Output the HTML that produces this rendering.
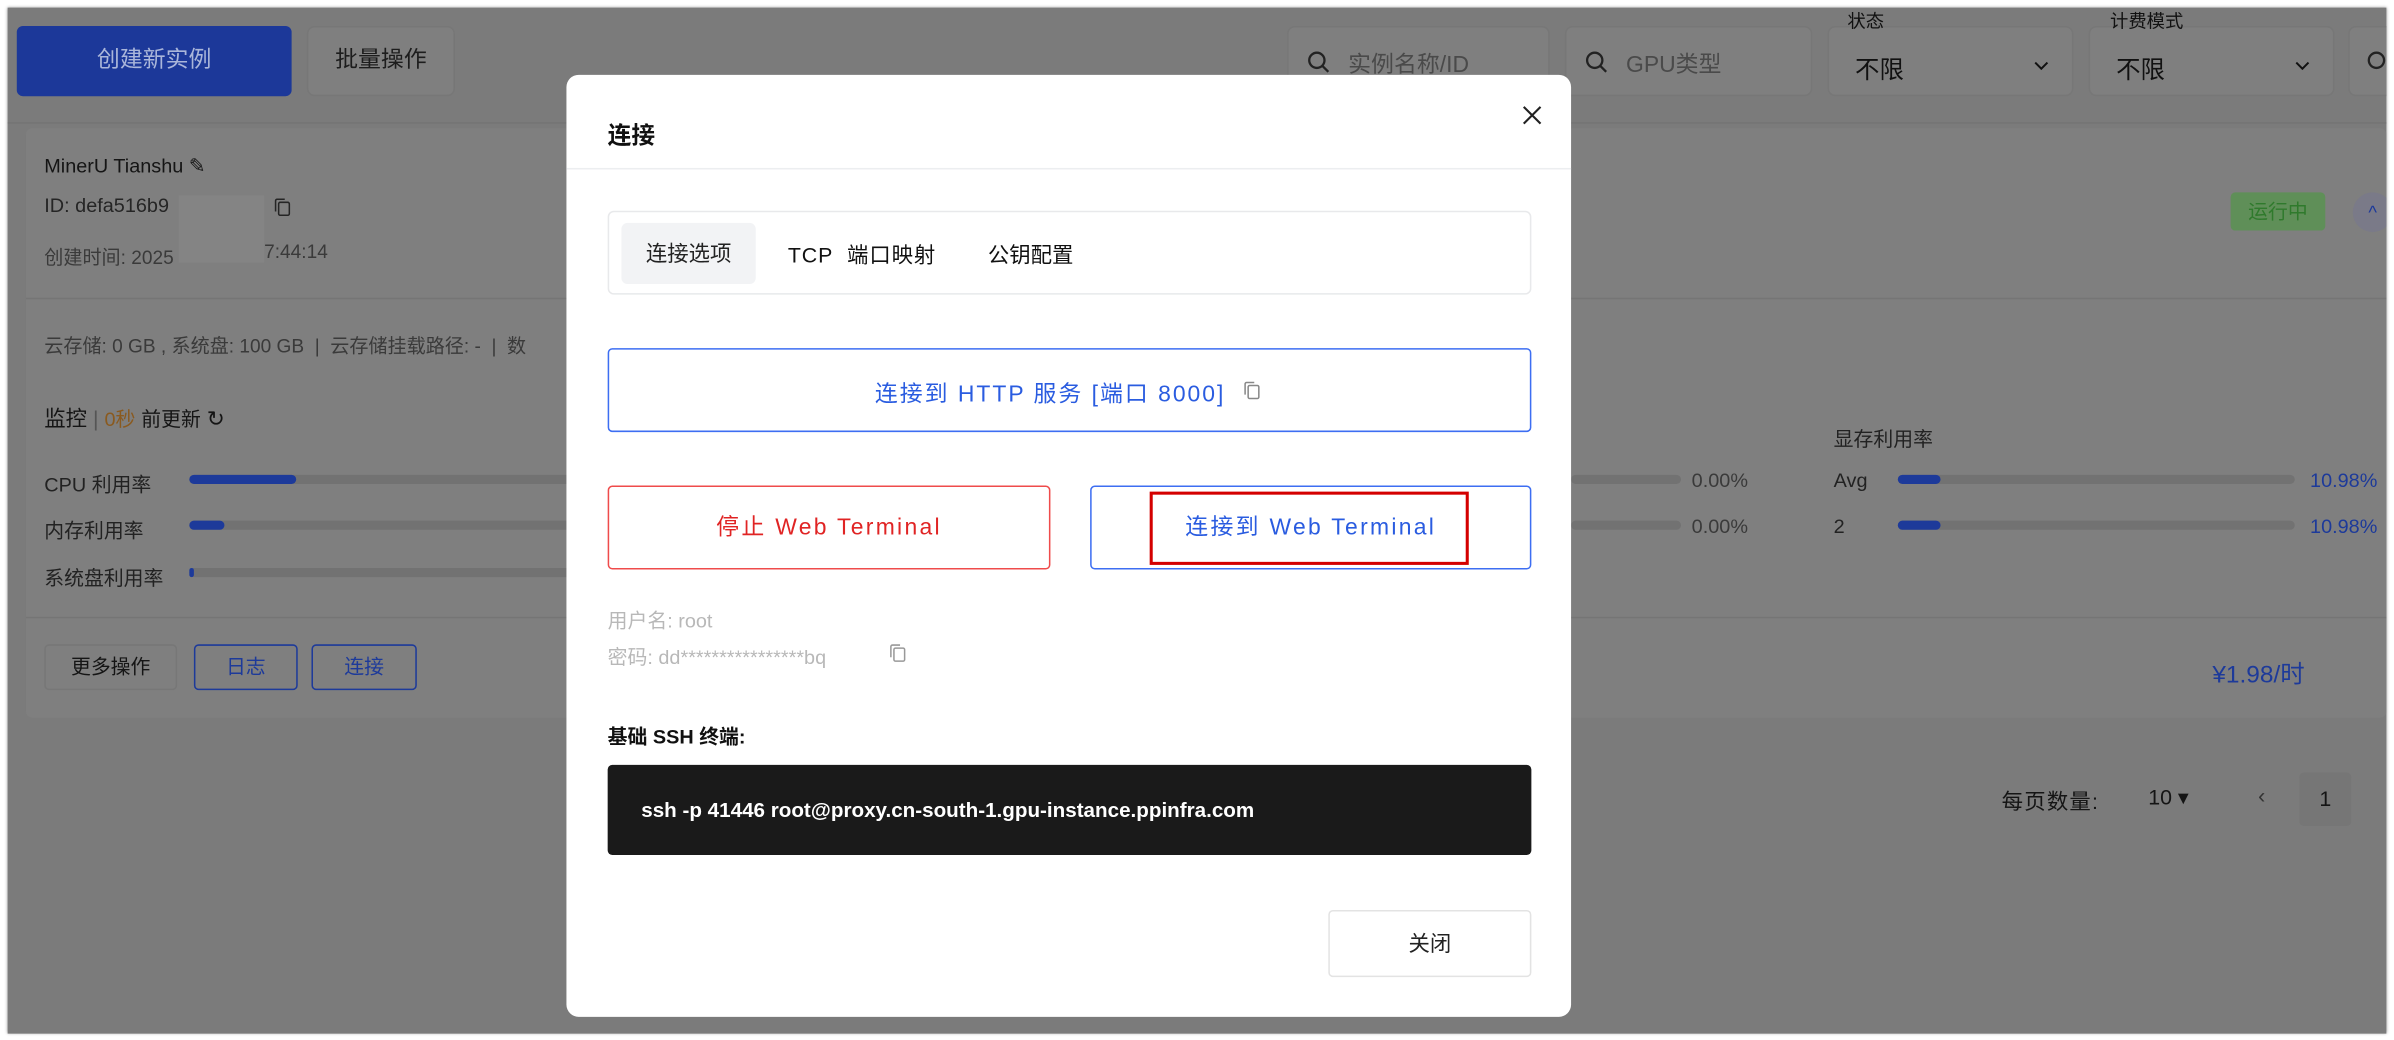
<!DOCTYPE html>
<html><head><meta charset="utf-8"><style>
html,body{margin:0;padding:0;background:#fff;width:2394px;height:1040px;overflow:hidden}
#w{position:absolute;left:0;top:0;width:1568px;height:681px;transform:scale(1.52679);transform-origin:0 0;font-family:"Liberation Sans","Noto Sans CJK SC",sans-serif;font-size:14px}
.a{position:absolute}
#bg{left:5px;top:5px;width:1558px;height:672px;background:#7b7b7b;overflow:hidden;box-shadow:0 0 2px #999}
.t{white-space:nowrap}
.track{position:absolute;height:6px;border-radius:3px;background:#727272}
.fill{position:absolute;left:0;top:0;height:6px;border-radius:3px;background:#1d3a9a}
.inp{position:absolute;top:12px;height:46px;background:#7f7f7f;border:1px solid #777;border-radius:5px;box-sizing:border-box}
svg{position:absolute}
</style></head><body><div id="w">
<div class="a" id="bg">
  <div class="a" style="left:6px;top:12px;width:180px;height:46px;background:#1c3899;border-radius:4px;color:#aab6da;font-size:15px;text-align:center;line-height:46px">创建新实例</div>
  <div class="a" style="left:196px;top:12px;width:97px;height:46px;background:#7f7f7f;border:1px solid #777;box-sizing:border-box;border-radius:5px;color:#1d1d1d;font-size:15px;text-align:center;line-height:44px">批量操作</div>
  <div class="inp" style="left:838px;width:172px"><svg style="left:12px;top:15px" width="15" height="15" viewBox="0 0 15 15"><circle cx="6.5" cy="6.5" r="5" fill="none" stroke="#222" stroke-width="1.5"/><path d="M10 10l4 4" stroke="#222" stroke-width="1.5"/></svg><span class="a t" style="left:39px;top:13px;color:#4a4a4a;font-size:15px">实例名称/ID</span></div>
  <div class="inp" style="left:1020px;width:162px"><svg style="left:12px;top:15px" width="15" height="15" viewBox="0 0 15 15"><circle cx="6.5" cy="6.5" r="5" fill="none" stroke="#222" stroke-width="1.5"/><path d="M10 10l4 4" stroke="#222" stroke-width="1.5"/></svg><span class="a t" style="left:39px;top:13px;color:#4a4a4a;font-size:15px">GPU类型</span></div>
  <div class="inp" style="left:1192px;width:161px"><span class="a t" style="left:17px;top:14px;color:#111;font-size:16px">不限</span><svg style="left:134px;top:22px" width="10" height="6" viewBox="0 0 10 6"><path d="M1 1l4 4 4-4" fill="none" stroke="#111" stroke-width="1.3"/></svg></div>
  <div class="inp" style="left:1363px;width:161px"><span class="a t" style="left:17px;top:14px;color:#111;font-size:16px">不限</span><svg style="left:134px;top:22px" width="10" height="6" viewBox="0 0 10 6"><path d="M1 1l4 4 4-4" fill="none" stroke="#111" stroke-width="1.3"/></svg></div>
  <div class="a t" style="left:1205px;top:2px;font-size:12px;color:#111;line-height:14px">状态</div>
  <div class="a t" style="left:1377px;top:2px;font-size:12px;color:#111;line-height:14px">计费模式</div>
  <div class="inp" style="left:1533px;width:40px"><svg style="left:11px;top:15px" width="15" height="15" viewBox="0 0 15 15"><circle cx="6.5" cy="6.5" r="5" fill="none" stroke="#222" stroke-width="1.5"/></svg></div>
  <div class="a" style="left:0;top:75px;width:1558px;height:1px;background:#747474"></div>
  <div class="a" style="left:12px;top:79px;width:1546px;height:386px;background:#7f7f7f;border-radius:4px"></div>
  <div class="a t" style="left:24px;top:96px;color:#151515;font-size:13px">MinerU Tianshu ✎</div>
  <div class="a t" style="left:24px;top:122px;color:#252525;font-size:13px">ID: defa516b9</div>
  <svg style="left:174px;top:124px" width="12" height="13" viewBox="0 0 12 13"><rect x="3.5" y="3.5" width="7" height="8.5" rx="1" fill="none" stroke="#252525"/><path d="M1.5 9.5V2.5a1 1 0 0 1 1-1h5" fill="none" stroke="#252525"/></svg>
  <div class="a t" style="left:24px;top:153px;color:#3a3a3a;font-size:12.5px">创建时间: 2025</div>
  <div class="a t" style="left:168px;top:153px;color:#3a3a3a;font-size:12.5px">7:44:14</div>
  <div class="a" style="left:112px;top:123px;width:56px;height:44px;background:#848484"></div>
  <div class="a" style="left:1456px;top:121px;width:62px;height:25px;background:#5f8f58;border-radius:3px;color:#2f7a2c;font-size:13px;text-align:center;line-height:25px">运行中</div>
  <div class="a" style="left:1536px;top:121px;width:26px;height:26px;border-radius:13px;background:#7a7a88;color:#1d3a9a;text-align:center;line-height:26px;font-size:12px">^</div>
  <div class="a" style="left:12px;top:190px;width:1546px;height:1px;background:#757575"></div>
  <div class="a t" style="left:24px;top:211px;color:#3a3a3a;font-size:12.5px">云存储: 0 GB , 系统盘: 100 GB &nbsp;|&nbsp; 云存储挂载路径: - &nbsp;|&nbsp; 数</div>
  <div class="a t" style="left:24px;top:259px;color:#151515;font-size:14px">监控 <span style="color:#555">|</span> <span style="color:#8a5a1f;font-size:13px">0秒</span> <span style="font-size:13px">前更新</span> ↻</div>
  <div class="a t" style="left:24px;top:302px;color:#222;font-size:13px">CPU 利用率</div>
  <div class="a t" style="left:24px;top:332px;color:#222;font-size:13px">内存利用率</div>
  <div class="a t" style="left:24px;top:363px;color:#222;font-size:13px">系统盘利用率</div>
  <div class="track" style="left:119px;top:306px;width:250px"><div class="fill" style="width:70px"></div></div>
  <div class="track" style="left:119px;top:336px;width:250px"><div class="fill" style="width:23px"></div></div>
  <div class="track" style="left:119px;top:367px;width:250px"><div class="fill" style="width:3px"></div></div>
  <div class="track" style="left:1024px;top:306px;width:72px"></div>
  <div class="track" style="left:1024px;top:336px;width:72px"></div>
  <div class="a t" style="left:1103px;top:302px;color:#3a3a3a;font-size:13px">0.00%</div>
  <div class="a t" style="left:1103px;top:332px;color:#3a3a3a;font-size:13px">0.00%</div>
  <div class="a t" style="left:1196px;top:272px;color:#222;font-size:13px">显存利用率</div>
  <div class="a t" style="left:1196px;top:302px;color:#222;font-size:13px">Avg</div>
  <div class="a t" style="left:1196px;top:332px;color:#222;font-size:13px">2</div>
  <div class="track" style="left:1238px;top:306px;width:260px"><div class="fill" style="width:28px"></div></div>
  <div class="track" style="left:1238px;top:336px;width:260px"><div class="fill" style="width:28px"></div></div>
  <div class="a t" style="left:1508px;top:302px;color:#1d3a9a;font-size:13px">10.98%</div>
  <div class="a t" style="left:1508px;top:332px;color:#1d3a9a;font-size:13px">10.98%</div>
  <div class="a" style="left:12px;top:399px;width:1546px;height:1px;background:#757575"></div>
  <div class="a" style="left:24px;top:417px;width:87px;height:30px;border:1px solid #777;box-sizing:border-box;border-radius:3px;color:#151515;font-size:13px;text-align:center;line-height:28px">更多操作</div>
  <div class="a" style="left:122px;top:417px;width:68px;height:30px;border:1px solid #1d3a9a;box-sizing:border-box;border-radius:3px;color:#1d3a9a;font-size:13px;text-align:center;line-height:28px">日志</div>
  <div class="a" style="left:199px;top:417px;width:69px;height:30px;border:1px solid #1d3a9a;box-sizing:border-box;border-radius:3px;color:#1d3a9a;font-size:13px;text-align:center;line-height:28px">连接</div>
  <div class="a t" style="left:1444px;top:423px;color:#1d3a9a;font-size:16px">¥1.98/时</div>
  <div class="a t" style="left:1306px;top:510px;color:#151515;font-size:14px;letter-spacing:0.8px">每页数量:</div>
  <div class="a t" style="left:1402px;top:509px;color:#151515;font-size:14px">10 ▾</div>
  <div class="a t" style="left:1474px;top:508px;color:#333;font-size:14px">‹</div>
  <div class="a" style="left:1501px;top:501px;width:34px;height:35px;background:#767676;border-radius:3px;color:#151515;text-align:center;line-height:35px">1</div>
</div>

<div class="a" style="left:371px;top:49px;width:658px;height:617px;background:#fff;border-radius:8px">
  <div class="a t" style="left:27px;top:28px;font-size:15.5px;font-weight:bold;color:#111">连接</div>
  <svg style="left:626px;top:20px" width="13" height="13" viewBox="0 0 13 13"><path d="M1 1l11 11M12 1L1 12" stroke="#222" stroke-width="1.4"/></svg>
  <div class="a" style="left:0;top:61px;width:658px;height:1px;background:#eceef0"></div>
  <div class="a" style="left:27px;top:89px;width:605px;height:55px;border:1px solid #e8e9eb;box-sizing:border-box;border-radius:4px"></div>
  <div class="a" style="left:36px;top:97px;width:88px;height:40px;background:#f2f3f5;border-radius:4px;text-align:center;line-height:40px;color:#222;font-size:14px">连接选项</div>
  <div class="a t" style="left:145px;top:108px;color:#111;font-size:14px;letter-spacing:0.6px">TCP&nbsp; 端口映射</div>
  <div class="a t" style="left:276px;top:108px;color:#111;font-size:14px">公钥配置</div>
  <div class="a" style="left:27px;top:179px;width:605px;height:55px;border:1px solid #3d6ef2;box-sizing:border-box;border-radius:3px"></div>
  <div class="a t" style="left:202px;top:198px;color:#2a5ce0;font-size:15px;letter-spacing:1.3px">连接到 HTTP 服务 [端口 8000]</div>
  <svg style="left:443px;top:200px" width="12" height="13" viewBox="0 0 12 13"><rect x="3.5" y="3.5" width="7" height="8.5" rx="1" fill="none" stroke="#888"/><path d="M1.5 9.5V2.5a1 1 0 0 1 1-1h5" fill="none" stroke="#888"/></svg>
  <div class="a" style="left:27px;top:269px;width:290px;height:55px;border:1px solid #ef4b4b;box-sizing:border-box;border-radius:3px;text-align:center;line-height:53px;color:#e02424;font-size:15px;letter-spacing:1.5px">停止 Web Terminal</div>
  <div class="a" style="left:343px;top:269px;width:289px;height:55px;border:1px solid #3d6ef2;box-sizing:border-box;border-radius:3px;text-align:center;line-height:53px;color:#2a5ce0;font-size:15px;letter-spacing:1.5px">连接到 Web Terminal</div>
  <div class="a" style="left:382px;top:273px;width:209px;height:48px;border:2px solid #d40000;box-sizing:border-box"></div>
  <div class="a t" style="left:27px;top:347px;color:#b8b8b8;font-size:13px">用户名: root</div>
  <div class="a t" style="left:27px;top:371px;color:#b8b8b8;font-size:13px">密码: dd****************bq</div>
  <svg style="left:211px;top:372px" width="12" height="13" viewBox="0 0 12 13"><rect x="3.5" y="3.5" width="7" height="8.5" rx="1" fill="none" stroke="#999"/><path d="M1.5 9.5V2.5a1 1 0 0 1 1-1h5" fill="none" stroke="#999"/></svg>
  <div class="a t" style="left:27px;top:423px;color:#111;font-size:13px;font-weight:bold">基础 SSH 终端:</div>
  <div class="a" style="left:27px;top:452px;width:605px;height:59px;background:#1a1a1a;border-radius:3px"></div>
  <div class="a t" style="left:49px;top:474px;color:#fff;font-size:13.5px;font-weight:bold">ssh -p 41446 root@proxy.cn-south-1.gpu-instance.ppinfra.com</div>
  <div class="a" style="left:499px;top:547px;width:133px;height:44px;border:1px solid #e3e3e3;box-sizing:border-box;border-radius:3px;text-align:center;line-height:42px;color:#222;font-size:14px">关闭</div>
</div>
</div></body></html>
